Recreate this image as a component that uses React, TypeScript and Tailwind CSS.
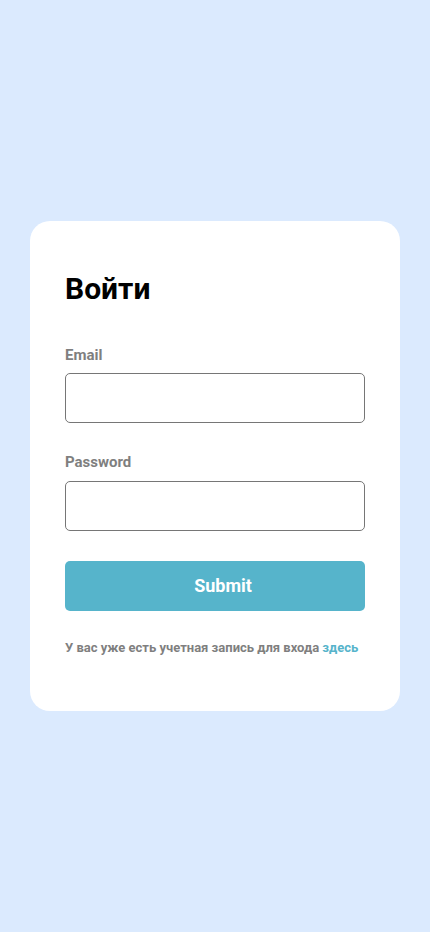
export default function App() {
  return (
    <div
      className="flex min-h-[932px] w-full items-center justify-center bg-[#dbeafe]"
      style={{ fontFamily: "Roboto, 'Noto Sans', sans-serif" }}
    >
      <div className="w-[370px] rounded-[20px] bg-white px-[35px] pb-[54px] pt-[45px]">
        <h1 className="text-[30px] font-bold leading-normal text-black">Войти</h1>

        <form className="mt-[33px] flex flex-col" onSubmit={(e) => e.preventDefault()}>
          <label className="text-[15px] font-bold leading-normal text-[#7f7f7f]">Email</label>
          <input
            type="email"
            className="mt-[7px] h-[50px] w-full rounded-[5px] border border-[#767676] px-3 outline-none"
          />

          <label className="mt-[28px] text-[15px] font-bold leading-normal text-[#7f7f7f]">
            Password
          </label>
          <input
            type="password"
            className="mt-[7px] h-[50px] w-full rounded-[5px] border border-[#767676] px-3 outline-none"
          />

          <button
            type="submit"
            className="mt-[30px] h-[50px] w-full rounded-[5px] bg-[#56b4cb] pl-4 text-[18px] font-bold text-white"
          >
            Submit
          </button>
        </form>

        <p className="mt-[27px] text-[13px] font-bold leading-normal text-[#7f7f7f]">
          У вас уже есть учетная запись для входа{" "}
          <a href="#" className="text-[#56b4cb]">
            здесь
          </a>
        </p>
      </div>
    </div>
  )
}
